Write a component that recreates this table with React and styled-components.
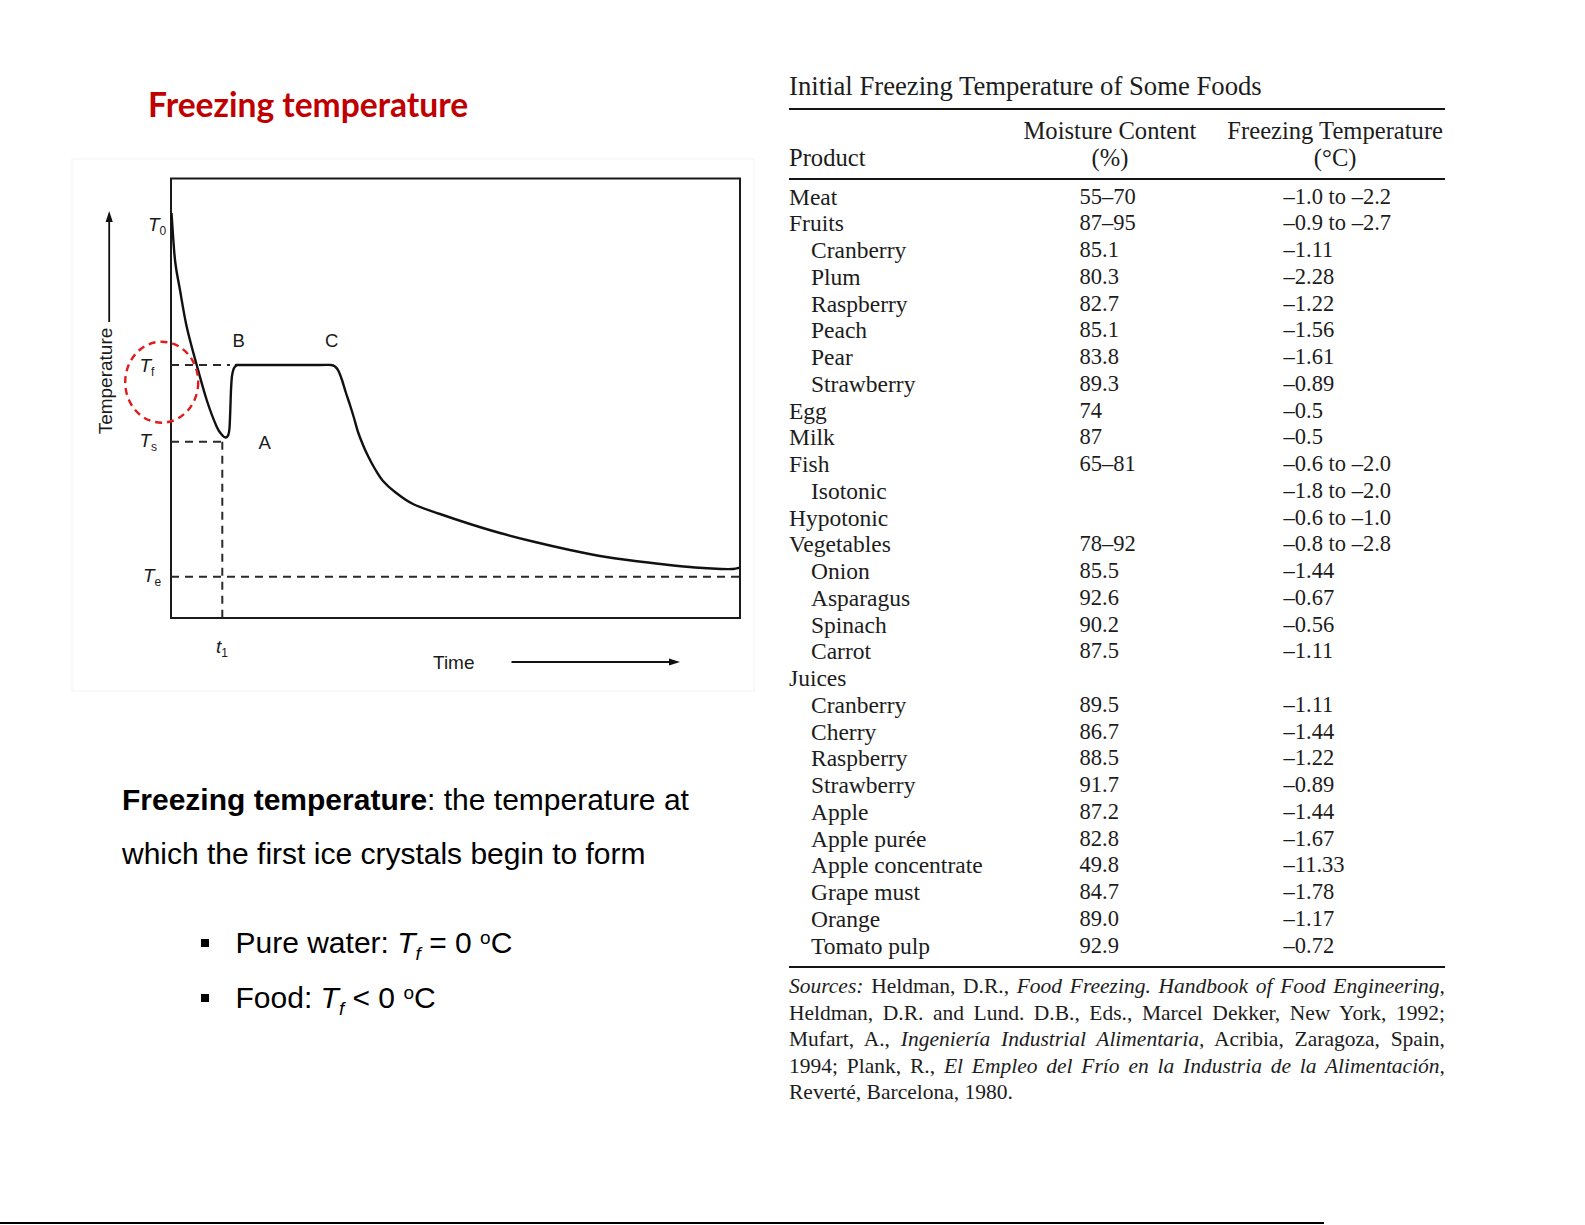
import React from 'react';
import styled, { createGlobalStyle } from 'styled-components';

const GlobalStyle = createGlobalStyle`
  html, body { margin: 0; padding: 0; background: #fff; }
  body { font-family: "Liberation Sans", Arial, sans-serif; color: #000; }
`;

const Page = styled.div`
  width: 1585px;
  height: 1225px;
  display: flex;
  flex-direction: column;
  overflow: hidden;
  background: #fff;
`;

const Columns = styled.div`
  flex: 1;
  display: grid;
  grid-template-columns: 789px 656px;
  align-items: start;
`;

const LeftColumn = styled.section`
  display: flex;
  flex-direction: column;
  align-items: flex-start;
  padding-top: 85px;
`;

const SlideTitle = styled.h1`
  margin: 0 0 0 148px;
  font-family: Lato, "Open Sans", sans-serif;
  font-weight: 700;
  font-size: 33.6px;
  line-height: 38px;
  color: #c00000;
`;

const ChartSvg = styled.svg`
  display: block;
  margin: 32px 0 0 70px;
  width: 690px;
  height: 545px;
  font-family: "Liberation Sans", Arial, sans-serif;
`;

const Definition = styled.p`
  margin: 72.7px 0 0 122px;
  font-size: 30px;
  line-height: 54.6px;
  color: #000;
`;

const BulletList = styled.ul`
  list-style: none;
  margin: 33.8px 0 0 201px;
  padding: 0;
`;

const BulletItem = styled.li`
  display: flex;
  align-items: center;
  height: 54.6px;
  font-size: 30px;
`;

const BulletMark = styled.span`
  width: 8px;
  height: 8px;
  background: #000;
  margin-right: 26.5px;
  flex: none;
`;

const Ital = styled.i`
  font-style: italic;
`;

const Sub = styled.sub`
  font-size: 19px;
  font-style: italic;
  vertical-align: -7px;
  line-height: 0;
`;

const Sup = styled.sup`
  font-size: 19px;
  vertical-align: 9px;
  line-height: 0;
`;

const RightColumn = styled.section`
  padding-top: 71px;
  font-family: "Liberation Serif", "Times New Roman", serif;
  color: #1c1c1c;
`;

const Caption = styled.div`
  font-size: 26.7px;
  line-height: 30px;
  white-space: nowrap;
`;

const Rule = styled.div`
  height: ${(p) => p.$h}px;
  margin-top: ${(p) => p.$mt}px;
  background: #151515;
`;

const HeaderGrid = styled.div`
  display: grid;
  grid-template-columns: 1fr auto auto;
  column-gap: 31px;
  align-items: end;
  margin-top: 7px;
  padding-right: 2px;
  font-size: 24.6px;
  line-height: 27px;
  white-space: nowrap;
`;

const HeaderCell = styled.div`
  text-align: ${(p) => p.$align || 'left'};
`;

const Rows = styled.div`
  padding-top: 3.6px;
`;

const Row = styled.div`
  display: grid;
  grid-template-columns: 290.5px 204px 1fr;
  height: 26.75px;
  line-height: 26.75px;
  font-size: 23.5px;
  white-space: nowrap;
`;

const ProductCell = styled.div`
  padding-left: ${(p) => (p.$sub ? 22 : 0)}px;
`;

const NumCell = styled.div`
  font-size: 22.5px;
`;

const Sources = styled.div`
  margin-top: 5.2px;
  font-size: 21.5px;
  line-height: 26.55px;
`;

const SourceLine = styled.div`
  text-align: justify;
  text-align-last: ${(p) => (p.$last ? 'left' : 'justify')};
`;

const BottomRule = styled.div`
  width: 1324px;
  height: 2px;
  margin-bottom: 1px;
  background: #000;
  flex: none;
`;

const rows = [
  ['Meat', '55–70', '–1.0 to –2.2'],
  ['Fruits', '87–95', '–0.9 to –2.7'],
  ['Cranberry', '85.1', '–1.11', true],
  ['Plum', '80.3', '–2.28', true],
  ['Raspberry', '82.7', '–1.22', true],
  ['Peach', '85.1', '–1.56', true],
  ['Pear', '83.8', '–1.61', true],
  ['Strawberry', '89.3', '–0.89', true],
  ['Egg', '74', '–0.5'],
  ['Milk', '87', '–0.5'],
  ['Fish', '65–81', '–0.6 to –2.0'],
  ['Isotonic', '', '–1.8 to –2.0', true],
  ['Hypotonic', '', '–0.6 to –1.0'],
  ['Vegetables', '78–92', '–0.8 to –2.8'],
  ['Onion', '85.5', '–1.44', true],
  ['Asparagus', '92.6', '–0.67', true],
  ['Spinach', '90.2', '–0.56', true],
  ['Carrot', '87.5', '–1.11', true],
  ['Juices', '', ''],
  ['Cranberry', '89.5', '–1.11', true],
  ['Cherry', '86.7', '–1.44', true],
  ['Raspberry', '88.5', '–1.22', true],
  ['Strawberry', '91.7', '–0.89', true],
  ['Apple', '87.2', '–1.44', true],
  ['Apple purée', '82.8', '–1.67', true],
  ['Apple concentrate', '49.8', '–11.33', true],
  ['Grape must', '84.7', '–1.78', true],
  ['Orange', '89.0', '–1.17', true],
  ['Tomato pulp', '92.9', '–0.72', true],
];

const curvePoints = [
  [171.5, 213], [175, 260], [180, 290], [186.7, 326.7], [196.7, 365],
  [206.7, 400], [216.7, 426.7], [222.5, 435.5], [225.7, 437.5], [228.3, 435],
  [229.5, 428], [230.3, 410], [231, 390], [232, 376], [233.8, 368.5],
  [236.5, 365.5], [240, 365], [280, 365], [320, 365], [331, 365],
  [335, 366.5], [338.5, 371], [342, 380], [346, 393], [350, 405],
  [354, 418], [358, 432], [363, 445], [368, 456], [375, 469], [383, 481],
  [395, 492], [413, 504], [440, 514], [470, 524], [500, 533], [535, 542],
  [570, 550], [600, 556], [635, 561], [665, 564.5], [695, 567.5],
  [721, 569], [733, 569], [740, 567.5],
];

function smoothPath(pts) {
  const f = (n) => n.toFixed(2);
  let d = `M${f(pts[0][0])},${f(pts[0][1])}`;
  for (let i = 0; i < pts.length - 1; i++) {
    const p0 = pts[i - 1] || pts[i];
    const p1 = pts[i];
    const p2 = pts[i + 1];
    const p3 = pts[i + 2] || p2;
    const c1x = p1[0] + (p2[0] - p0[0]) / 6;
    const c1y = p1[1] + (p2[1] - p0[1]) / 6;
    const c2x = p2[0] - (p3[0] - p1[0]) / 6;
    const c2y = p2[1] - (p3[1] - p1[1]) / 6;
    d += ` C${f(c1x)},${f(c1y)} ${f(c2x)},${f(c2y)} ${f(p2[0])},${f(p2[1])}`;
  }
  return d;
}

const curveD = smoothPath(curvePoints);

function TLabel({ x, y, sub, lower }) {
  return (
    <text x={x} y={y} fontSize="19" fill="#1a1a1a">
      <tspan fontStyle="italic">{lower ? 't' : 'T'}</tspan>
      <tspan fontSize="12" dy="4">{sub}</tspan>
    </text>
  );
}

function CoolingChart() {
  const dash = { stroke: '#2a2a2a', strokeWidth: 2, strokeDasharray: '8 6', fill: 'none' };
  return (
    <ChartSvg viewBox="70 155 690 545">
      <rect x="72" y="159" width="682" height="532" fill="none" stroke="#f3f3f3" strokeWidth="1" />
      <rect x="171" y="178.5" width="569" height="439.5" fill="none" stroke="#1a1a1a" strokeWidth="2" />
      <line x1="171" y1="365" x2="230" y2="365" {...dash} />
      <line x1="171" y1="441.7" x2="222.3" y2="441.7" {...dash} />
      <line x1="222.3" y1="441.7" x2="222.3" y2="618" {...dash} />
      <line x1="171" y1="576.7" x2="740" y2="576.7" {...dash} />
      <path d={curveD} fill="none" stroke="#111" strokeWidth="2.4" strokeLinejoin="round" />
      <ellipse cx="161.7" cy="382.2" rx="36.5" ry="40.5" fill="none" stroke="#e01b1b" strokeWidth="2.4" strokeDasharray="7 5" />
      <line x1="109.2" y1="322" x2="109.2" y2="220" stroke="#111" strokeWidth="1.8" />
      <polygon points="109.2,211 105.6,222 112.8,222" fill="#111" />
      <text x="105.7" y="381" fontSize="19" fill="#1a1a1a" textAnchor="middle" dominantBaseline="central" transform="rotate(-90 105.7 381)">Temperature</text>
      <TLabel x={148} y={231} sub="0" />
      <TLabel x={139.5} y={372} sub="f" />
      <TLabel x={139.5} y={447} sub="s" />
      <TLabel x={143} y={582} sub="e" />
      <TLabel x={216} y={653} sub="1" lower />
      <text x="232.5" y="347" fontSize="18.5" fill="#1a1a1a">B</text>
      <text x="325" y="347" fontSize="18.5" fill="#1a1a1a">C</text>
      <text x="258.5" y="449" fontSize="18.5" fill="#1a1a1a">A</text>
      <text x="433" y="669" fontSize="19" fill="#1a1a1a">Time</text>
      <line x1="511.5" y1="662" x2="671" y2="662" stroke="#111" strokeWidth="1.8" />
      <polygon points="680,662 669,658.5 669,665.5" fill="#111" />
    </ChartSvg>
  );
}

export default function App() {
  return (
    <Page>
      <GlobalStyle />
      <Columns>
        <LeftColumn>
          <SlideTitle>Freezing temperature</SlideTitle>
          <CoolingChart />
          <Definition>
            <b>Freezing temperature</b>: the temperature at
            <br />
            which the first ice crystals begin to form
          </Definition>
          <BulletList>
            <BulletItem>
              <BulletMark />
              <span>
                Pure water: <Ital>T</Ital><Sub>f</Sub> = 0 <Sup>o</Sup>C
              </span>
            </BulletItem>
            <BulletItem>
              <BulletMark />
              <span>
                Food: <Ital>T</Ital><Sub>f</Sub> &lt; 0 <Sup>o</Sup>C
              </span>
            </BulletItem>
          </BulletList>
        </LeftColumn>
        <RightColumn>
          <Caption>Initial Freezing Temperature of Some Foods</Caption>
          <Rule $h={1.5} $mt={7} />
          <HeaderGrid>
            <HeaderCell>Product</HeaderCell>
            <HeaderCell $align="center">
              Moisture Content
              <br />
              (%)
            </HeaderCell>
            <HeaderCell $align="center">
              Freezing Temperature
              <br />
              (°C)
            </HeaderCell>
          </HeaderGrid>
          <Rule $h={2} $mt={7.5} />
          <Rows>
            {rows.map(([name, moist, temp, sub], i) => (
              <Row key={i}>
                <ProductCell $sub={sub}>{name}</ProductCell>
                <NumCell>{moist}</NumCell>
                <NumCell>{temp}</NumCell>
              </Row>
            ))}
          </Rows>
          <Rule $h={2} $mt={6.6} />
          <Sources>
            <SourceLine>
              <i>Sources:</i> Heldman, D.R., <i>Food Freezing. Handbook of Food Engineering,</i>
            </SourceLine>
            <SourceLine>Heldman, D.R. and Lund. D.B., Eds., Marcel Dekker, New York, 1992;</SourceLine>
            <SourceLine>
              Mufart, A., <i>Ingeniería Industrial Alimentaria,</i> Acribia, Zaragoza, Spain,
            </SourceLine>
            <SourceLine>
              1994; Plank, R., <i>El Empleo del Frío en la Industria de la Alimentación,</i>
            </SourceLine>
            <SourceLine $last>Reverté, Barcelona, 1980.</SourceLine>
          </Sources>
        </RightColumn>
      </Columns>
      <BottomRule />
    </Page>
  );
}
